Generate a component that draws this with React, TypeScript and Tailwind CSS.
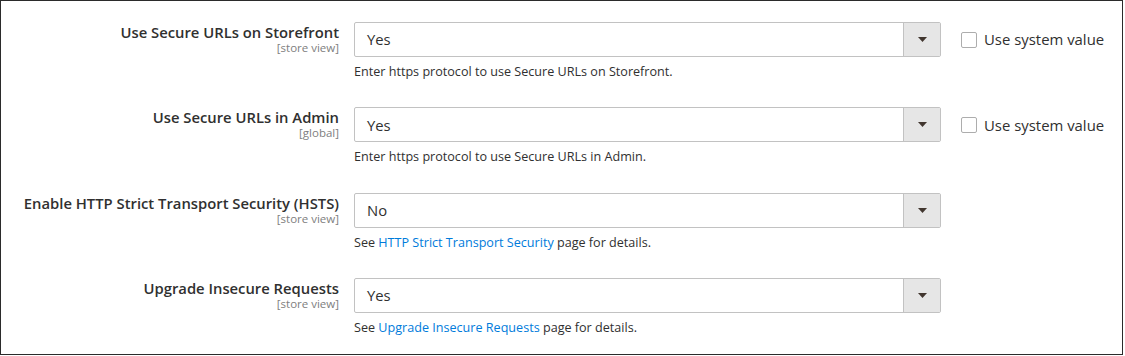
const font = { fontFamily: '"Open Sans", "Noto Sans", sans-serif' }

type Row = {
  label: string
  scope: string
  value: string
  note: React.ReactNode
  system?: boolean
}

const rows: Row[] = [
  {
    label: 'Use Secure URLs on Storefront',
    scope: '[store view]',
    value: 'Yes',
    note: 'Enter https protocol to use Secure URLs on Storefront.',
    system: true,
  },
  {
    label: 'Use Secure URLs in Admin',
    scope: '[global]',
    value: 'Yes',
    note: 'Enter https protocol to use Secure URLs in Admin.',
    system: true,
  },
  {
    label: 'Enable HTTP Strict Transport Security (HSTS)',
    scope: '[store view]',
    value: 'No',
    note: (
      <>
        See <a className="text-[#007bdb]">HTTP Strict Transport Security</a> page for details.
      </>
    ),
  },
  {
    label: 'Upgrade Insecure Requests',
    scope: '[store view]',
    value: 'Yes',
    note: (
      <>
        See <a className="text-[#007bdb]">Upgrade Insecure Requests</a> page for details.
      </>
    ),
  },
]

function Select({ value }: { value: string }) {
  return (
    <div className="flex h-[35px] w-[587px] rounded-[2px] border border-[#c2c2c2] bg-white">
      <div className="flex flex-1 items-center pl-[12px] text-[14.8px] text-[#303030]">{value}</div>
      <div className="flex w-[37px] items-center justify-center border-l border-[#c2c2c2] bg-[#e6e6e6]">
        <svg width="9" height="5" viewBox="0 0 9 5">
          <path d="M0 0h9L4.5 5z" fill="#41362f" />
        </svg>
      </div>
    </div>
  )
}

export default function App() {
  return (
    <div className="bg-white" style={font}>
      <div className="h-[355px] w-[1123px] border border-[#2b2b2b] bg-white pt-[21px]">
        <div className="flex flex-col gap-[27.3px]">
          {rows.map((r) => (
            <div key={r.label} className="flex">
              <div className="w-[338px] shrink-0 pt-[1px] text-right">
                <div className="text-[14.8px] leading-[18px] font-semibold text-[#303030]">{r.label}</div>
                <div className="text-[11.5px] leading-[14px] text-[#808080]">{r.scope}</div>
              </div>
              <div className="ml-[15px] w-[587px] shrink-0">
                <Select value={r.value} />
                <div className="mt-[6px] text-[12.6px] leading-[17px] text-[#303030]">{r.note}</div>
              </div>
              {r.system && (
                <label className="ml-[20px] flex h-[35px] items-center gap-[7px] text-[14.9px] text-[#303030]">
                  <span className="h-[16px] w-[16px] rounded-[2px] border border-[#adadad] bg-white" />
                  Use system value
                </label>
              )}
            </div>
          ))}
        </div>
      </div>
    </div>
  )
}
